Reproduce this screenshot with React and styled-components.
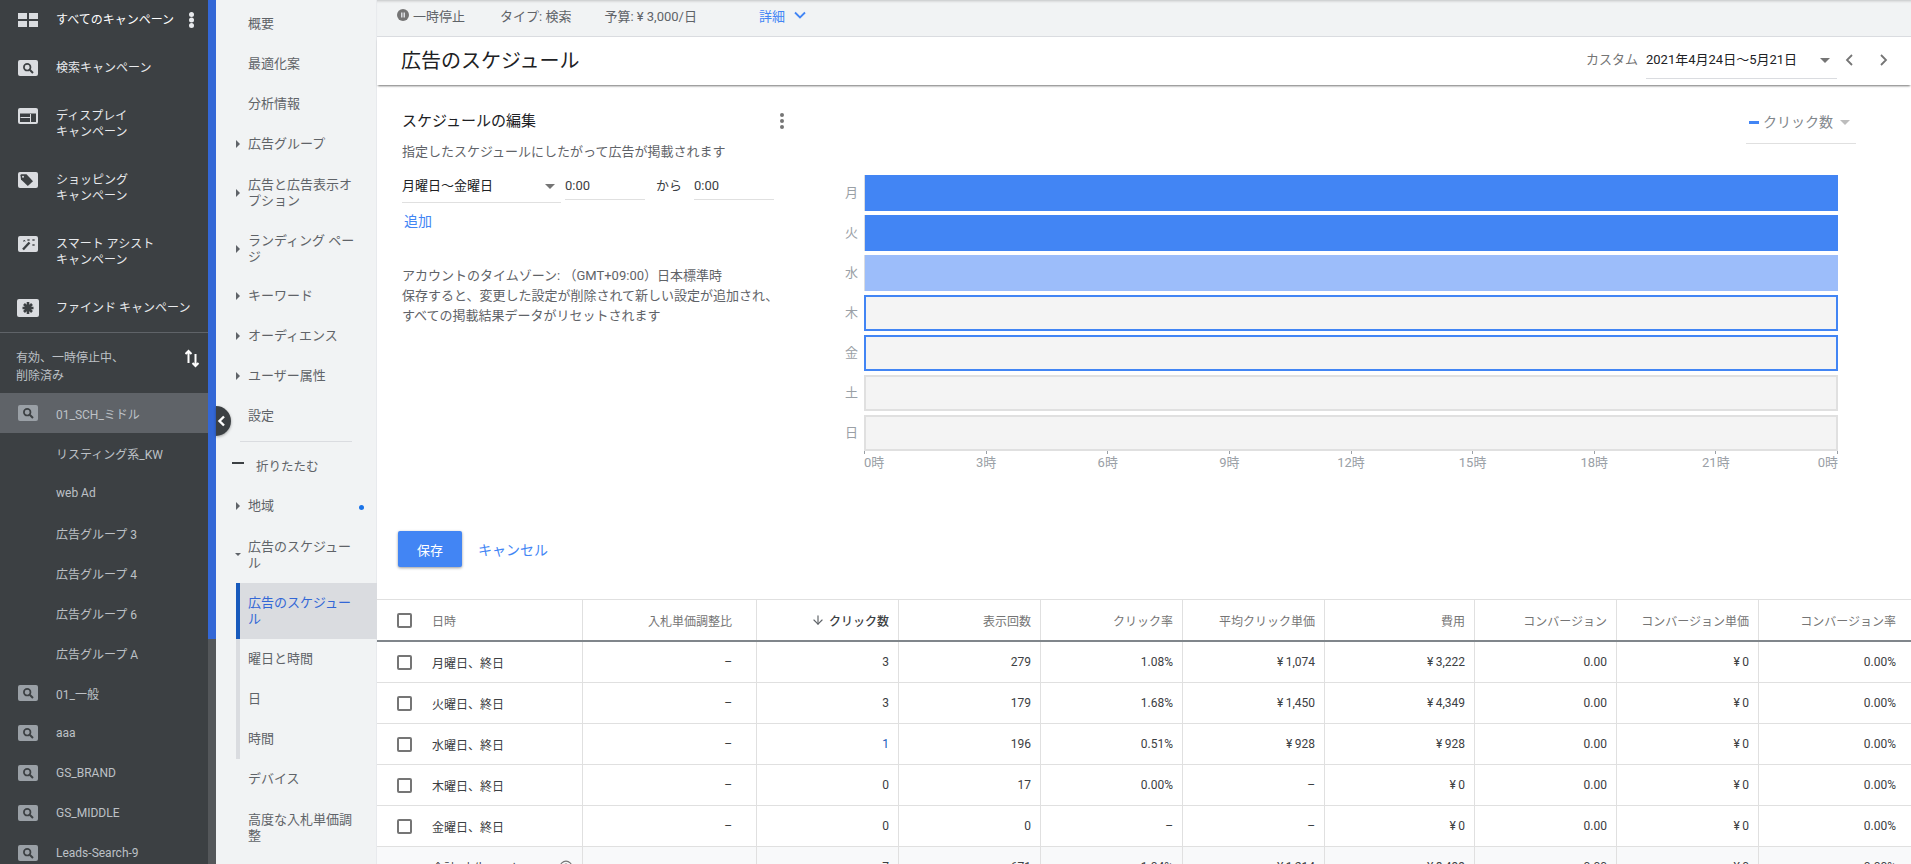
import React from "react";
import styled, { createGlobalStyle } from "styled-components";
import { ArrowDown, CircleHelp } from "lucide-react";

const Global = createGlobalStyle`
  html, body { margin: 0; padding: 0; background: #fff; overflow: hidden; }
  body { font-family: Roboto, "Noto Sans CJK JP", sans-serif; font-size: 13px; color: #3c4043; }
  * { box-sizing: border-box; }
`;

const Page = styled.div`
  display: flex;
  width: 1911px;
  height: 864px;
  overflow: hidden;
`;

/* ---------- Campaign nav ---------- */
const Nav = styled.nav`
  width: 208px;
  flex: none;
  background: #3c4043;
  display: flex;
  flex-direction: column;
`;
const TypeRow = styled.div`
  display: flex;
  flex: none;
  align-items: flex-start;
  gap: 18px;
  height: ${(p) => p.$h}px;
  margin-top: ${(p) => p.$mt || 0}px;
  padding: ${(p) => p.$pad}px 0 0 18px;
  font-size: 12px;
  line-height: 16px;
  color: ${(p) => (p.$all ? "#fff" : "#e8eaed")};
  border-bottom: ${(p) => (p.$divider ? "1px solid #5f6368" : "none")};
  position: relative;
`;
const IconSlot = styled.span`
  display: flex;
  flex: none;
  width: 20px;
  height: 16px;
  justify-content: center;
  overflow: visible;
`;
const NavKebab = styled.span`
  position: absolute;
  left: 189px;
  top: 12px;
  display: flex;
`;
const StatusRow = styled.div`
  display: flex;
  flex: none;
  justify-content: space-between;
  height: 60px;
  padding: 16px 8px 0 16px;
  font-size: 12px;
  line-height: 18px;
  color: #bdc1c6;
`;
const CampaignRow = styled.div`
  display: flex;
  align-items: center;
  gap: 18px;
  height: 40px;
  flex: none;
  padding-left: ${(p) => (p.$indent ? 56 : 18)}px;
  font-size: 12px;
  color: #bdc1c6;
  background: ${(p) => (p.$active ? "#5f6368" : "transparent")};
`;

const NavScroll = styled.div`
  width: 8px;
  flex: none;
  background: #54575a;
`;
const NavThumb = styled.div`
  height: 639px;
  background: #3367d6;
`;

/* ---------- Section nav ---------- */
const SubNav = styled.nav`
  width: 161px;
  flex: none;
  position: relative;
  background: #f1f3f4;
  border-right: 1px solid #e8eaed;
  padding-top: 4px;
`;
const SubRow = styled.div`
  display: flex;
  align-items: center;
  height: ${(p) => (p.$two ? 56 : 40)}px;
  padding-left: 32px;
  padding-top: ${(p) => (p.$two ? 1 : 0)}px;
  font-size: 13px;
  line-height: 16px;
  color: #5f6368;
  position: relative;
`;
const SubLabel = styled.span`
  display: block;
  width: 108px;
  flex: none;
`;
const ArrowRight = styled.span`
  flex: none;
  width: 0;
  height: 0;
  margin-left: -12px;
  margin-right: 8px;
  border-left: 4px solid #5f6368;
  border-top: 4px solid transparent;
  border-bottom: 4px solid transparent;
`;
const ArrowOpen = styled.span`
  flex: none;
  width: 0;
  height: 0;
  margin-left: -13px;
  margin-right: 7px;
  border-top: 3px solid #5f6368;
  border-left: 3px solid transparent;
  border-right: 3px solid transparent;
`;
const SubDivider = styled.div`
  height: 1px;
  margin: 5px 24px 4px 24px;
  background: #dadce0;
`;
const CollapseRow = styled.div`
  display: flex;
  align-items: center;
  height: 40px;
  padding: 0 0 2px 16px;
  font-size: 12.5px;
  color: #5f6368;
`;
const CollapseDash = styled.span`
  width: 12px;
  height: 2px;
  margin-right: 12px;
  margin-top: -5px;
  background: #3c4043;
`;
const BlueDot = styled.span`
  position: absolute;
  left: 143px;
  top: 19px;
  width: 5px;
  height: 5px;
  border-radius: 50%;
  background: #1a73e8;
`;
const SubGroup = styled.div`
  margin-left: 20px;
  margin-top: 1px;
  border-left: 4px solid #dadce0;
`;
const SubGroupRow = styled.div`
  display: flex;
  align-items: center;
  height: ${(p) => (p.$two ? 56 : 40)}px;
  padding-left: 8px;
  font-size: 13px;
  line-height: 16px;
  color: ${(p) => (p.$active ? "#3367d6" : "#5f6368")};
  ${(p) =>
    p.$active
      ? "margin-left:-4px; margin-right:-1px; border-left:4px solid #185abc; background:#dadce0;"
      : ""}
`;
const CollapseTab = styled.div`
  position: absolute;
  left: 0;
  top: 406px;
  width: 15px;
  height: 30px;
  border-radius: 0 15px 15px 0;
  background: #3c4043;
  box-shadow: 0 1px 3px rgba(0, 0, 0, 0.35);
  display: flex;
  align-items: center;
  padding-left: 1px;
`;

/* ---------- Main ---------- */
const Main = styled.main`
  flex: 1;
  min-width: 0;
  display: flex;
  flex-direction: column;
`;
const StatusBar = styled.div`
  display: flex;
  align-items: center;
  flex: none;
  height: 37px;
  padding: 0 0 6px 20px;
  background: #f1f3f4;
  border-bottom: 1px solid #dadce0;
  box-shadow: inset 0 3px 3px -2px rgba(0, 0, 0, 0.2);
  font-size: 13px;
  color: #5f6368;
`;
const PauseIcon = styled.svg`
  margin-right: 4px;
`;
const StatusItem = styled.span`
  margin-left: ${(p) => p.$ml || 0}px;
`;
const DetailLink = styled.span`
  margin-left: 62px;
  color: #4285f4;
  margin-right: 9px;
`;
const TitleBar = styled.header`
  display: flex;
  align-items: flex-start;
  flex: none;
  height: 48px;
  padding-left: 24px;
  background: #fff;
  box-shadow: 0 2px 2px -1px rgba(0, 0, 0, 0.55);
  position: relative;
`;
const Title = styled.h1`
  margin: 10px 0 0;
  font-size: 20px;
  font-weight: 400;
  line-height: 28px;
  color: #202124;
  flex: 1;
`;
const RangeLabel = styled.span`
  margin-top: 14px;
  margin-right: 8px;
  font-size: 13px;
  line-height: 18px;
  color: #757575;
`;
const RangeSelect = styled.div`
  width: 191px;
  height: 42px;
  padding-top: 14px;
  display: flex;
  justify-content: space-between;
  font-size: 13px;
  line-height: 18px;
  color: #202124;
  border-bottom: 1px solid #dadce0;
`;
const Caret = styled.span`
  flex: none;
  width: 0;
  height: 0;
  margin: ${(p) => p.$m || "7px 7px 0 0"};
  border-top: 5px solid ${(p) => p.$c || "#757575"};
  border-left: 5px solid transparent;
  border-right: 5px solid transparent;
`;
const PagerIcon = styled.svg`
  margin: 16px ${(p) => p.$mr || 0}px 0 ${(p) => p.$ml}px;
  flex: none;
`;

const Editor = styled.section`
  flex: none;
  height: 513px;
  margin-top: 2px;
  border-bottom: 1px solid #e0e0e0;
`;
const EditorTop = styled.div`
  display: flex;
  height: 444px;
`;
const Form = styled.div`
  width: 407px;
  flex: none;
  padding: 24px 0 0 25px;
`;
const FormHead = styled.div`
  display: flex;
  justify-content: space-between;
  align-items: center;
  height: 20px;
  font-size: 15px;
  line-height: 20px;
  color: #202124;
`;
const FormDesc = styled.p`
  margin: 11px 0 0;
  font-size: 13px;
  line-height: 20px;
  color: #5f6368;
`;
const FormRow = styled.div`
  display: flex;
  align-items: flex-start;
  margin-top: 3px;
  font-size: 13px;
  color: #3c4043;
`;
const DaySelect = styled.div`
  display: flex;
  justify-content: space-between;
  width: 159px;
  height: 38px;
  padding-top: 12px;
  line-height: 18px;
  color: #202124;
  border-bottom: 1px solid #e0e0e0;
  margin-right: 4px;
`;
const TimeInput = styled.div`
  width: 80px;
  height: 35px;
  padding-top: 12px;
  line-height: 18px;
  border-bottom: 1px solid #e0e0e0;
`;
const Kara = styled.span`
  width: 49px;
  padding: 12px 0 0 11px;
  line-height: 18px;
  font-size: 13px;
`;
const AddLink = styled.div`
  margin: 8px 0 0 2px;
  font-size: 14px;
  line-height: 20px;
  color: #4285f4;
`;
const Notes = styled.p`
  margin: 35px 0 0;
  font-size: 13px;
  line-height: 20px;
  color: #5f6368;
  white-space: nowrap;
`;

const Chart = styled.div`
  flex: 1;
  min-width: 0;
  padding: 22px 0 0 54px;
`;
const MetricWrap = styled.div`
  display: flex;
  justify-content: flex-end;
  padding-right: 55px;
  margin-bottom: 31px;
`;
const MetricSelect = styled.div`
  display: flex;
  width: 110px;
  height: 35px;
  padding: 4px 0 0 3px;
  font-size: 14px;
  line-height: 18px;
  color: #80868b;
  border-bottom: 1px solid #e0e0e0;
`;
const MetricDash = styled.span`
  width: 10px;
  height: 3px;
  margin: 8px 4px 0 0;
  background: #4285f4;
  flex: none;
`;
const Bars = styled.div`
  display: flex;
  flex-direction: column;
  gap: 4px;
  padding-right: 73px;
`;
const BarRow = styled.div`
  display: flex;
  align-items: stretch;
  gap: 6px;
  height: 36px;
`;
const DayLabel = styled.span`
  width: 20px;
  flex: none;
  text-align: right;
  font-size: 13px;
  line-height: 36px;
  color: #9aa0a6;
`;
const barStyles = {
  solid: "background:#4285f4; border-left:1px solid #dadce0;",
  pale: "background:#9cbdfa; border-left:1px solid #dadce0;",
  active: "background:#f4f4f4; border:2px solid #4285f4;",
  empty: "background:#f4f4f4; border:2px solid #e0e0e0;",
};
const Bar = styled.div`
  flex: 1;
  ${(p) => barStyles[p.$kind]}
`;
const Axis = styled.div`
  display: flex;
  justify-content: space-between;
  margin: 0 73px 0 26px;
`;
const Tick = styled.div`
  width: 1px;
  display: flex;
  flex-direction: column;
  align-items: ${(p) => p.$align};
  font-size: 13px;
  line-height: 16px;
  color: #9aa0a6;
  white-space: nowrap;
`;
const TickMark = styled.span`
  width: 1px;
  height: 3px;
  background: #9aa0a6;
  margin-bottom: 1px;
  flex: none;
`;
const Actions = styled.div`
  display: flex;
  align-items: center;
  gap: 16px;
  padding-left: 21px;
`;
const SaveButton = styled.button`
  width: 64px;
  height: 36px;
  border: none;
  border-radius: 2px;
  background: #4285f4;
  color: #fff;
  font: inherit;
  font-size: 13px;
  box-shadow: 0 1px 3px rgba(0, 0, 0, 0.4);
`;
const CancelLink = styled.span`
  font-size: 14px;
  color: #4285f4;
`;

/* ---------- Table ---------- */
const GridRow = styled.div`
  display: grid;
  grid-template-columns: 206px 174px 142px 142px 142px 142px 150px 142px 142px 152px;
  height: ${(p) => (p.$head ? 42 : 41)}px;
  flex: none;
  border-bottom: ${(p) => (p.$head ? "2px solid #80868b" : "1px solid #e0e0e0")};
  background: ${(p) => (p.$total ? "#f8f9fa" : "#fff")};
  font-size: 12px;
`;
const Cell = styled.div`
  display: flex;
  align-items: center;
  justify-content: flex-end;
  gap: 4px;
  padding-right: 9px;
  border-right: 1px solid #e0e0e0;
  white-space: nowrap;
  color: ${(p) => (p.$link ? "#185abc" : p.$head ? "#757575" : "#3c4043")};
  font-weight: ${(p) => (p.$bold ? 500 : 400)};
  ${(p) => (p.$bold ? "color:#3c4043;" : "")}
  &:nth-child(2) { padding-right: 24px; }
  &:last-child { border-right: none; padding-right: 15px; }
`;
const NameCell = styled(Cell)`
  justify-content: flex-start;
  gap: 20px;
  padding-left: 20px;
`;
const Checkbox = styled.span`
  flex: none;
  width: 15px;
  height: 15px;
  border: 2px solid #757575;
  border-radius: 2px;
`;
const CheckSpace = styled.span`
  flex: none;
  width: 15px;
`;
const TotalName = styled.span`
  width: 105px;
  overflow: hidden;
  text-overflow: ellipsis;
`;
const HelpIcon = styled(CircleHelp)`
  margin-left: 2px;
  flex: none;
  color: #757575;
`;
const TableWrap = styled.div`
  display: flex;
  flex-direction: column;
`;

/* ---------- Icons ---------- */
const ChipSearch = ({ c = "#dadce0" }) => (
  <svg width="20" height="16" viewBox="0 0 20 16">
    <rect width="20" height="16" rx="2" fill={c} />
    <circle cx="9.2" cy="7.2" r="3.3" fill="none" stroke="#3c4043" strokeWidth="1.7" />
    <path d="M11.7 9.7 L15 13" stroke="#3c4043" strokeWidth="2" />
  </svg>
);
const ChipAll = () => (
  <svg width="20" height="16" viewBox="0 0 20 16">
    <path d="M0 1h9v6H0zM11 1h9v6h-9zM0 9h9v6H0zM11 9h9v6h-9z" fill="#dadce0" />
  </svg>
);
const ChipDisplay = () => (
  <svg width="20" height="16" viewBox="0 0 20 16">
    <rect width="20" height="16" rx="2" fill="#dadce0" />
    <rect x="2" y="5.5" width="16" height="8.5" fill="#3c4043" />
    <path d="M2.5 9.5h10M12.5 6v8" stroke="#dadce0" strokeWidth="1" />
  </svg>
);
const ChipTag = () => (
  <svg width="20" height="16" viewBox="0 0 20 16">
    <rect width="20" height="16" rx="2" fill="#dadce0" />
    <path d="M2.5 3.2 A1 1 0 0 1 3.5 2.2 H8.5 L15 9.2 L9.8 14 L3 7.5 Z" fill="#3c4043" />
    <circle cx="5" cy="4.8" r="1" fill="#dadce0" />
  </svg>
);
const ChipWand = () => (
  <svg width="20" height="16" viewBox="0 0 20 16">
    <rect width="20" height="16" rx="2" fill="#dadce0" />
    <path d="M5 13.5 L11.5 6.5" stroke="#3c4043" strokeWidth="2.4" />
    <path d="M9.5 3l2 2M11.5 3l-2 2M14.5 3l2 2M16.5 3l-2 2M14.5 8l2 2M16.5 8l-2 2M5.5 4l1.6 1.6M7.1 4L5.5 5.6" stroke="#3c4043" strokeWidth="0.9" />
  </svg>
);
const ChipFind = () => (
  <svg width="22" height="18" viewBox="0 0 22 18" style={{ margin: "-1px -1px" }}>
    <rect width="22" height="18" rx="2" fill="#dadce0" />
    <path d="M11 3v12M5.5 9h11M7 5l8 8M15 5l-8 8" stroke="#3c4043" strokeWidth="2.6" />
  </svg>
);
const SortIcon = () => (
  <svg width="15" height="19" viewBox="0 0 15 19" fill="none" stroke="#fff" strokeWidth="2">
    <path d="M3.5 14V2M0.5 5L3.5 2 6.5 5" />
    <path d="M10.5 5v12M7.5 14l3 3 3-3" />
  </svg>
);
const Kebab = ({ c, r = 2, s = 16 }) => (
  <svg width={r * 2} height={s} viewBox={`0 0 ${r * 2} ${s}`} fill={c}>
    <circle cx={r} cy={r} r={r} />
    <circle cx={r} cy={s / 2} r={r} />
    <circle cx={r} cy={s - r} r={r} />
  </svg>
);

/* ---------- Data ---------- */
const campaigns = [
  { n: "01_SCH_ミドル", icon: 1, active: 1 },
  { n: "リスティング系_KW" },
  { n: "web Ad" },
  { n: "広告グループ 3" },
  { n: "広告グループ 4" },
  { n: "広告グループ 6" },
  { n: "広告グループ A" },
  { n: "01_一般", icon: 1 },
  { n: "aaa", icon: 1 },
  { n: "GS_BRAND", icon: 1 },
  { n: "GS_MIDDLE", icon: 1 },
  { n: "Leads-Search-9", icon: 1 },
];
const bars = [
  ["月", "solid"],
  ["火", "solid"],
  ["水", "pale"],
  ["木", "active"],
  ["金", "active"],
  ["土", "empty"],
  ["日", "empty"],
];
const ticks = ["0時", "3時", "6時", "9時", "12時", "15時", "18時", "21時", "0時"];
const heads = ["入札単価調整比", "クリック数", "表示回数", "クリック率", "平均クリック単価", "費用", "コンバージョン", "コンバージョン単価", "コンバージョン率"];
const Y = "¥\u2009";
const rows = [
  ["月曜日、終日", "–", "3", "279", "1.08%", Y + "1,074", Y + "3,222", "0.00", Y + "0", "0.00%"],
  ["火曜日、終日", "–", "3", "179", "1.68%", Y + "1,450", Y + "4,349", "0.00", Y + "0", "0.00%"],
  ["水曜日、終日", "–", "1", "196", "0.51%", Y + "928", Y + "928", "0.00", Y + "0", "0.00%"],
  ["木曜日、終日", "–", "0", "17", "0.00%", "–", Y + "0", "0.00", Y + "0", "0.00%"],
  ["金曜日、終日", "–", "0", "0", "–", "–", Y + "0", "0.00", Y + "0", "0.00%"],
];
const total = ["", "7", "671", "1.04%", Y + "1,214", Y + "8,499", "0.00", Y + "0", "0.00%"];

export default function App() {
  return (
    <Page>
      <Global />
      <Nav>
        <TypeRow $all $h={40} $pad={12}>
          <IconSlot><ChipAll /></IconSlot>
          <span>すべてのキャンペーン</span>
          <NavKebab><Kebab c="#e8eaed" r={2.5} s={16} /></NavKebab>
        </TypeRow>
        <TypeRow $h={40} $mt={8} $pad={12}>
          <IconSlot><ChipSearch /></IconSlot>
          <span>検索キャンペーン</span>
        </TypeRow>
        <TypeRow $h={64} $mt={3} $pad={17}>
          <IconSlot><ChipDisplay /></IconSlot>
          <span>ディスプレイ<br />キャンペーン</span>
        </TypeRow>
        <TypeRow $h={64} $pad={17}>
          <IconSlot><ChipTag /></IconSlot>
          <span>ショッピング<br />キャンペーン</span>
        </TypeRow>
        <TypeRow $h={64} $pad={17}>
          <IconSlot><ChipWand /></IconSlot>
          <span>スマート アシスト<br />キャンペーン</span>
        </TypeRow>
        <TypeRow $h={50} $pad={17} $divider>
          <IconSlot><ChipFind /></IconSlot>
          <span>ファインド キャンペーン</span>
        </TypeRow>
        <StatusRow>
          <span>有効、一時停止中、<br />削除済み</span>
          <SortIcon />
        </StatusRow>
        {campaigns.map((c) => (
          <CampaignRow key={c.n} $active={c.active} $indent={!c.icon}>
            {c.icon ? <IconSlot><ChipSearch c="#9aa0a6" /></IconSlot> : null}
            <span>{c.n}</span>
          </CampaignRow>
        ))}
      </Nav>
      <NavScroll><NavThumb /></NavScroll>

      <SubNav>
        <SubRow><SubLabel>概要</SubLabel></SubRow>
        <SubRow><SubLabel>最適化案</SubLabel></SubRow>
        <SubRow><SubLabel>分析情報</SubLabel></SubRow>
        <SubRow><ArrowRight /><SubLabel>広告グループ</SubLabel></SubRow>
        <SubRow $two><ArrowRight /><SubLabel>広告と広告表示オプション</SubLabel></SubRow>
        <SubRow $two><ArrowRight /><SubLabel>ランディング ページ</SubLabel></SubRow>
        <SubRow><ArrowRight /><SubLabel>キーワード</SubLabel></SubRow>
        <SubRow><ArrowRight /><SubLabel>オーディエンス</SubLabel></SubRow>
        <SubRow><ArrowRight /><SubLabel>ユーザー属性</SubLabel></SubRow>
        <SubRow><SubLabel>設定</SubLabel></SubRow>
        <SubDivider />
        <CollapseRow><CollapseDash />折りたたむ</CollapseRow>
        <SubRow><ArrowRight /><SubLabel>地域</SubLabel><BlueDot /></SubRow>
        <SubRow $two><ArrowOpen /><SubLabel>広告のスケジュール</SubLabel></SubRow>
        <SubGroup>
          <SubGroupRow $two $active><SubLabel>広告のスケジュール</SubLabel></SubGroupRow>
          <SubGroupRow>曜日と時間</SubGroupRow>
          <SubGroupRow>日</SubGroupRow>
          <SubGroupRow>時間</SubGroupRow>
        </SubGroup>
        <SubRow><SubLabel>デバイス</SubLabel></SubRow>
        <SubRow $two><SubLabel>高度な入札単価調整</SubLabel></SubRow>
        <CollapseTab>
          <svg width="9" height="12" viewBox="0 0 9 12" fill="none" stroke="#fff" strokeWidth="2.4">
            <path d="M7 1.5L2.5 6 7 10.5" />
          </svg>
        </CollapseTab>
      </SubNav>

      <Main>
        <StatusBar>
          <PauseIcon width="12" height="12" viewBox="0 0 12 12">
            <circle cx="6" cy="6" r="6" fill="#757575" />
            <path d="M4 3.5h1.5v5H4zM6.5 3.5H8v5H6.5z" fill="#dadce0" />
          </PauseIcon>
          <StatusItem>一時停止</StatusItem>
          <StatusItem $ml={35}>タイプ: 検索</StatusItem>
          <StatusItem $ml={33}>予算: ¥ 3,000/日</StatusItem>
          <DetailLink>詳細</DetailLink>
          <svg width="12" height="8" viewBox="0 0 12 8" fill="none" stroke="#4285f4" strokeWidth="1.8">
            <path d="M1 1.5L6 6.5 11 1.5" />
          </svg>
        </StatusBar>
        <TitleBar>
          <Title>広告のスケジュール</Title>
          <RangeLabel>カスタム</RangeLabel>
          <RangeSelect>
            <span>2021年4月24日～5月21日</span>
            <Caret />
          </RangeSelect>
          <PagerIcon $ml={7} width="10" height="14" viewBox="0 0 10 14" fill="none" stroke="#757575" strokeWidth="1.8">
            <path d="M8 2L3 7l5 5" />
          </PagerIcon>
          <PagerIcon $ml={25} $mr={22} width="10" height="14" viewBox="0 0 10 14" fill="none" stroke="#757575" strokeWidth="1.8">
            <path d="M2 2l5 5-5 5" />
          </PagerIcon>
        </TitleBar>

        <Editor>
          <EditorTop>
            <Form>
              <FormHead>
                <span>スケジュールの編集</span>
                <Kebab c="#757575" r={2} s={16} />
              </FormHead>
              <FormDesc>指定したスケジュールにしたがって広告が掲載されます</FormDesc>
              <FormRow>
                <DaySelect>
                  <span>月曜日～金曜日</span>
                  <Caret $m="7px 6px 0 0" />
                </DaySelect>
                <TimeInput>0:00</TimeInput>
                <Kara>から</Kara>
                <TimeInput>0:00</TimeInput>
              </FormRow>
              <AddLink>追加</AddLink>
              <Notes>
                アカウントのタイムゾーン: （GMT+09:00）日本標準時<br />
                保存すると、変更した設定が削除されて新しい設定が追加され、<br />
                すべての掲載結果データがリセットされます
              </Notes>
            </Form>
            <Chart>
              <MetricWrap>
                <MetricSelect>
                  <MetricDash />
                  <span>クリック数</span>
                  <Caret $c="#bdbdbd" $m="7px 0 0 7px" />
                </MetricSelect>
              </MetricWrap>
              <Bars>
                {bars.map(([d, k]) => (
                  <BarRow key={d}>
                    <DayLabel>{d}</DayLabel>
                    <Bar $kind={k} />
                  </BarRow>
                ))}
              </Bars>
              <Axis>
                {ticks.map((t, i) => (
                  <Tick key={i} $align={i === 0 ? "flex-start" : i === ticks.length - 1 ? "flex-end" : "center"}>
                    <TickMark />
                    <span>{t}</span>
                  </Tick>
                ))}
              </Axis>
            </Chart>
          </EditorTop>
          <Actions>
            <SaveButton>保存</SaveButton>
            <CancelLink>キャンセル</CancelLink>
          </Actions>
        </Editor>

        <TableWrap>
          <GridRow $head>
            <NameCell $head><Checkbox /><span>日時</span></NameCell>
            {heads.map((h, i) => (
              <Cell key={h} $head $bold={i === 1}>
                {i === 1 ? <ArrowDown size={14} color="#5f6368" /> : null}
                {h}
              </Cell>
            ))}
          </GridRow>
          {rows.map((r) => (
            <GridRow key={r[0]}>
              <NameCell><Checkbox /><span>{r[0]}</span></NameCell>
              {r.slice(1).map((v, i) => (
                <Cell key={i} $link={r[0][0] === "水" && i === 1}>{v}</Cell>
              ))}
            </GridRow>
          ))}
          <GridRow $total>
            <NameCell>
              <CheckSpace />
              <TotalName>合計: 広告のスケジュール</TotalName>
              <HelpIcon size={14} />
            </NameCell>
            {total.map((v, i) => (
              <Cell key={i}>{v}</Cell>
            ))}
          </GridRow>
        </TableWrap>
      </Main>
    </Page>
  );
}
